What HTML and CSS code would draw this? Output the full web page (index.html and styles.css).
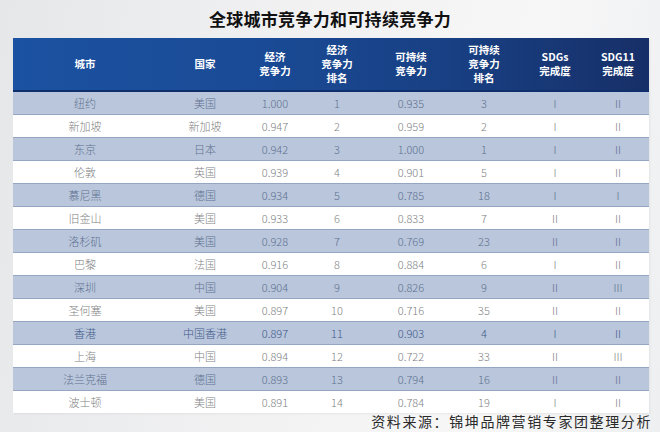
FILE: index.html
```html
<!DOCTYPE html>
<html lang="zh">
<head>
<meta charset="utf-8">
<title>全球城市竞争力和可持续竞争力</title>
<link rel="stylesheet" href="styles.css">
</head>
<body>
<div class="page">
  <h1 class="title">全球城市竞争力和可持续竞争力</h1>
  <table class="grid">
    <colgroup>
      <col class="c1"><col class="c2"><col class="c3"><col class="c4"><col class="c5"><col class="c6"><col class="c7"><col class="c8">
    </colgroup>
    <thead>
      <tr>
        <th>城市</th>
        <th>国家</th>
        <th>经济<br>竞争力</th>
        <th>经济<br>竞争力<br>排名</th>
        <th>可持续<br>竞争力</th>
        <th>可持续<br>竞争力<br>排名</th>
        <th>SDGs<br>完成度</th>
        <th>SDG11<br>完成度</th>
      </tr>
    </thead>
    <tbody>
      <tr class="alt"><td>纽约</td><td>美国</td><td>1.000</td><td>1</td><td>0.935</td><td>3</td><td>I</td><td>II</td></tr>
      <tr><td>新加坡</td><td>新加坡</td><td>0.947</td><td>2</td><td>0.959</td><td>2</td><td>I</td><td>II</td></tr>
      <tr class="alt"><td>东京</td><td>日本</td><td>0.942</td><td>3</td><td>1.000</td><td>1</td><td>I</td><td>II</td></tr>
      <tr><td>伦敦</td><td>英国</td><td>0.939</td><td>4</td><td>0.901</td><td>5</td><td>I</td><td>II</td></tr>
      <tr class="alt"><td>慕尼黑</td><td>德国</td><td>0.934</td><td>5</td><td>0.785</td><td>18</td><td>I</td><td>I</td></tr>
      <tr><td>旧金山</td><td>美国</td><td>0.933</td><td>6</td><td>0.833</td><td>7</td><td>II</td><td>II</td></tr>
      <tr class="alt"><td>洛杉矶</td><td>美国</td><td>0.928</td><td>7</td><td>0.769</td><td>23</td><td>II</td><td>II</td></tr>
      <tr><td>巴黎</td><td>法国</td><td>0.916</td><td>8</td><td>0.884</td><td>6</td><td>I</td><td>II</td></tr>
      <tr class="alt"><td>深圳</td><td>中国</td><td>0.904</td><td>9</td><td>0.826</td><td>9</td><td>II</td><td>III</td></tr>
      <tr><td>圣何塞</td><td>美国</td><td>0.897</td><td>10</td><td>0.716</td><td>35</td><td>II</td><td>II</td></tr>
      <tr class="alt dark"><td>香港</td><td>中国香港</td><td>0.897</td><td>11</td><td>0.903</td><td>4</td><td>I</td><td>II</td></tr>
      <tr><td>上海</td><td>中国</td><td>0.894</td><td>12</td><td>0.722</td><td>33</td><td>II</td><td>III</td></tr>
      <tr class="alt"><td>法兰克福</td><td>德国</td><td>0.893</td><td>13</td><td>0.794</td><td>16</td><td>II</td><td>II</td></tr>
      <tr><td>波士顿</td><td>美国</td><td>0.891</td><td>14</td><td>0.784</td><td>19</td><td>I</td><td>II</td></tr>
    </tbody>
  </table>
  <p class="source">资料来源：锦坤品牌营销专家团整理分析</p>
</div>
</body>
</html>
```

FILE: styles.css
```css
html, body {
  margin: 0;
  padding: 0;
}
body {
  width: 660px;
  height: 432px;
  overflow: hidden;
  font-family: "Noto Sans CJK SC", "Noto Sans", sans-serif;
  background: linear-gradient(100deg, #e6e7e9 0%, #f2f2f3 45%, #f7f7f8 75%, #eeeff0 100%);
}
.page {
  display: flex;
  flex-direction: column;
  align-items: stretch;
  padding-top: 7px;
}
.title {
  margin: 0 0 7px 0;
  height: 24px;
  line-height: 24px;
  font-size: 17px;
  font-weight: 700;
  color: #111;
  text-align: center;
  letter-spacing: 0.3px;
}
.grid {
  margin-left: 13px;
  width: 636px;
  border-collapse: collapse;
  table-layout: fixed;
  box-shadow: 1px 1px 2px rgba(0,0,0,0.06);
}
.c1 { width: 144px; }
.c2 { width: 96px; }
.c3 { width: 44px; }
.c4 { width: 80px; }
.c5 { width: 68px; }
.c6 { width: 78px; }
.c7 { width: 64px; }
.c8 { width: 62px; }
thead tr {
  height: 53px;
  background: linear-gradient(90deg, #1b52a1 0%, #1a4a95 40%, #183f82 70%, #172f68 100%);
  border-bottom: 2px solid #0f2f6c;
}
th {
  padding: 0;
  color: #ffffff;
  font-size: 10.5px;
  font-weight: 700;
  line-height: 14px;
  text-align: center;
  vertical-align: middle;
}
tbody tr {
  height: 23px;
  background: #ffffff;
}
tbody tr.alt {
  background: #b9c6db;
  border-top: 1px solid #94a6c2;
  border-bottom: 1px solid #94a6c2;
}
td {
  padding: 0;
  font-size: 11px;
  font-weight: 300;
  line-height: 20px;
  text-align: center;
  color: #808283;
}
tr.alt td {
  color: #5f7190;
}
tr.dark td {
  color: #3f5a8a;
}
.source {
  margin: 0 8px 0 0;
  text-align: right;
  font-size: 14px;
  line-height: 16px;
  letter-spacing: 1.6px;
  color: #2a2a2a;
}
```
